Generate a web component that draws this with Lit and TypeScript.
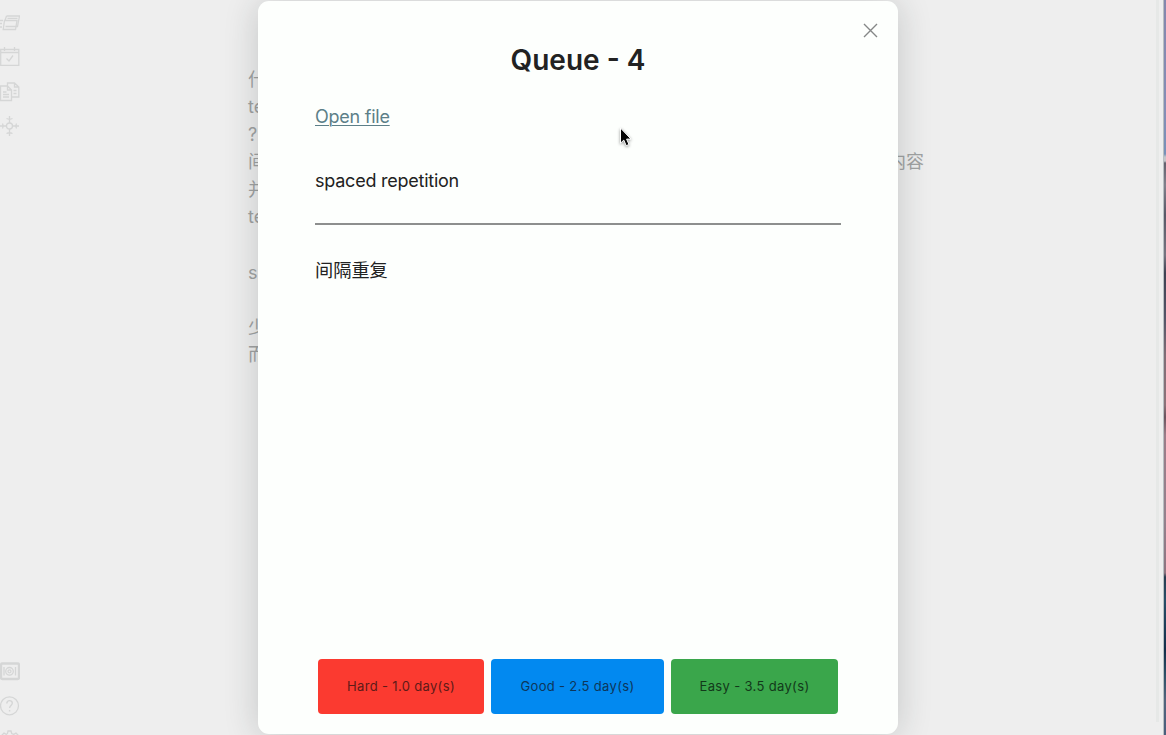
import { LitElement, html, css, svg } from "lit";
import { customElement } from "lit/decorators.js";

const LEFT_LINES = ["什么", "te", "?", "间", "并", "te", "", "s", "", "少", "而"];

const ICONS = {
  cards: svg`<path d="M6.500 3h13L17.500 13.500H5.500M6.500 3 5 7.500M4.500 7.500h12.500l-1.500 9H3.200zM7.500 5.300h10M-1 7.500h4M-1 10.500h3M-1 14h3"/>`,
  calendar: svg`<path d="M.7 2.500h18.100v15.800H.7zM.7 5.500h18.100M4.500 0v4M14.500 0v4M6.500 11.500l2.500 2.500 4-5.500"/>`,
  files: svg`<path d="M.5 4h7l4 4V18.500H.5zM7.500 4v4h4M3 10h3.500M3 12.500h6M3 15h6M7.500 3.500V1h7l4.300 4V15H12M14.500 1v4h4.300M13.500 8.500h3M13.500 11.500h3"/>`,
  graph: svg`<circle cx="9.500" cy="10" r="3"/><path d="M9.500 0v7M9.500 13v7M0 10h6.500M12.500 10H19M6.500 2.500q3 1.500 6 0M6.500 17.500q3-1.500 6 0M2.500 7.500q1.500 2.500 0 5M16.500 7.500q-1.500 2.500 0 5"/>`,
  vault: svg`<rect x="1" y="2.500" width="18" height="15.500" rx="1.500" stroke-width="2.400"/><circle cx="9.500" cy="10.300" r="3.800"/><circle cx="9.500" cy="10.300" r="1.500"/><path d="M4 6v8.500M15.500 6v8.500"/>`,
  help: svg`<circle cx="9.500" cy="9.800" r="9"/><path d="M6.800 7.500c.2-4 5.700-3.500 5.500-.2-.1 2.200-2.700 2.200-2.700 4.700M9.600 14v1.500" stroke-width="1.400"/>`,
  gear: svg`<path d="m8 1 3 0 .7 2.500 2 .9 2.300-1.300 2 2-1.300 2.300.9 2 2.400.7v3h-20v-3l2.400-.7.900-2L2 5.100l2-2 2.300 1.300 1.200-.9z"/>`,
};

@customElement("side-ribbon")
class SideRibbon extends LitElement {
  static styles = css`
    :host {
      display: flex;
      flex-direction: column;
      justify-content: space-between;
      width: 20px;
      height: 735px;
      overflow: hidden;
      box-sizing: border-box;
      padding-top: 12.500px;
    }
    .group { display: flex; flex-direction: column; gap: 14.500px; }
    .bottom { height: 74px; }
    svg {
      display: block;
      flex: none;
      width: 20px;
      height: 20px;
      fill: none;
      stroke: #d5d6d6;
      stroke-width: 1.300;
    }
  `;
  icon(shape: unknown) {
    return html`<svg viewBox="0 0 20 20">${shape}</svg>`;
  }
  render() {
    return html`
      <div class="group">${[ICONS.cards, ICONS.calendar, ICONS.files, ICONS.graph].map(this.icon)}</div>
      <div class="group bottom">${[ICONS.vault, ICONS.help, ICONS.gear].map(this.icon)}</div>
    `;
  }
}

@customElement("review-modal")
class ReviewModal extends LitElement {
  static styles = css`
    :host {
      display: flex;
      flex-direction: column;
      box-sizing: border-box;
      width: 640px;
      height: 733px;
      padding: 41px 57px 20.500px;
      border-radius: 11px;
      background: #fdfffd;
      box-shadow: 0 2px 34px rgba(30, 40, 38, 0.2);
      color: #222;
      position: relative;
    }
    .close {
      position: absolute;
      top: 22px;
      right: 20px;
      width: 15px;
      height: 15px;
      stroke: #858787;
      stroke-width: 1.400;
    }
    h2 {
      margin: 0;
      font-size: 28px;
      line-height: 36px;
      font-weight: 600;
      text-align: center;
    }
    .link {
      align-self: flex-start;
      margin-top: 25px;
      font-size: 18px;
      line-height: 28px;
      letter-spacing: -0.240px;
      color: #5c7f88;
      text-decoration: underline;
      text-underline-offset: 2px;
      text-decoration-thickness: 1px;
    }
    .question, .answer { font-size: 18px; line-height: 28px; }
    .question { margin-top: 36px; letter-spacing: -0.240px; }
    .answer { font-size: 18.200px; }
    .rule { height: 2px; margin: 28px 0 31px; background: #8d8f8e; }
    .actions { display: flex; gap: 7px; margin: auto 3px 0; }
    .action {
      flex: none;
      box-sizing: border-box;
      height: 55px;
      border: 0;
      border-radius: 4px;
      padding: 0;
      font: 13px/55px Inter, sans-serif;
      letter-spacing: 0.340px;
      text-align: center;
    }
    .hard { width: 166px; background: #fb3a30; color: #5e1b18; }
    .good { width: 173px; background: #0289f0; color: #0e365a; }
    .easy { width: 167px; background: #3aa64b; color: #12391a; }
  `;
  render() {
    return html`
      <svg class="close" viewBox="0 0 15 15"><path d="m1 1 13 13M14 1 1 14" /></svg>
      <h2>Queue - 4</h2>
      <a class="link">Open file</a>
      <div class="question">spaced repetition</div>
      <div class="rule"></div>
      <div class="answer">间隔重复</div>
      <div class="actions">
        <button class="action hard">Hard - 1.0 day(s)</button>
        <button class="action good">Good - 2.5 day(s)</button>
        <button class="action easy">Easy - 3.5 day(s)</button>
      </div>
    `;
  }
}

@customElement("app-root")
class AppRoot extends LitElement {
  static styles = css`
    :host {
      display: flex;
      position: relative;
      width: 1166px;
      height: 735px;
      overflow: hidden;
      background: #eee;
      font-family: Inter, "Noto Sans CJK SC", sans-serif;
    }
    .editor {
      display: flex;
      justify-content: space-between;
      width: 676px;
      margin-left: 228px;
      padding-top: 65.700px;
      color: #a0a2a2;
      font-size: 18px;
      line-height: 27.550px;
    }
    .line { height: 27.550px; white-space: nowrap; }
    .tail { padding-top: 82.700px; }
    .scroll {
      width: 3px;
      height: 722px;
      margin-left: auto;
      background: #e6e8e7;
    }
    .desktop {
      width: 2px;
      margin-left: 4px;
      border-left: 1px solid #b9bfc2;
      background: linear-gradient(
        #8487ad 0, #858db5 110px, #7891b8 154px, #c5c5cb 157px, #c5c5cb 161px,
        #64606d 163px, #82808c 185px, #595867 215px, #777480 255px, #3f4152 273px,
        #555568 320px, #806d76 355px, #8c7279 405px, #6b535d 417px, #9b7c88 435px,
        #94818d 520px, #8d737f 573px, #283c50 577px, #284e68 600px, #142e4a 650px,
        #2d5067 675px, #53647d 700px, #4a5e7c 735px
      );
    }
    .overlay {
      position: absolute;
      inset: 0;
      display: flex;
      align-items: center;
      justify-content: center;
      padding-right: 10px;
    }
    .cursor {
      position: absolute;
      left: 617px;
      top: 126px;
      width: 16px;
      height: 24px;
      overflow: visible;
      filter: drop-shadow(0 1px 1.500px rgba(0, 0, 0, 0.4));
    }
  `;
  render() {
    return html`
      <side-ribbon></side-ribbon>
      <div class="editor">
        <div>${LEFT_LINES.map((t) => html`<div class="line">${t}</div>`)}</div>
        <div class="tail">内容</div>
      </div>
      <div class="scroll"></div>
      <div class="desktop"></div>
      <div class="overlay"><review-modal></review-modal></div>
      <svg class="cursor" viewBox="0 0 16 24">
        <path d="M3.500 2v15.200l3.300-3.100 2.400 5.600 2.800-1.200-2.400-5.400h4.400z" fill="#050505" stroke="#fff" stroke-width="1" />
      </svg>
    `;
  }
}
